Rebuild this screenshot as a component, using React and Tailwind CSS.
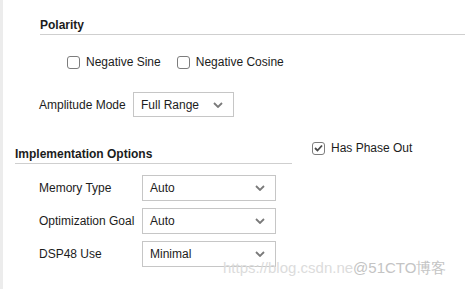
import React from "react";

function Chevron() {
  return (
    <svg width="10" height="6" viewBox="0 0 10 6" className="shrink-0">
      <path d="M1 1 L5 5 L9 1" fill="none" stroke="#7a7a7a" strokeWidth="1.8" />
    </svg>
  );
}

function Select({ value, w, h }) {
  return (
    <div
      className={`flex items-center justify-between border border-[#c6c6c6] bg-white pl-[7px] pr-[10px] ${w} ${h}`}
    >
      <span>{value}</span>
      <Chevron />
    </div>
  );
}

function Box({ checked }) {
  return (
    <div className="flex h-[13px] w-[13px] shrink-0 items-center justify-center rounded-[3px] border border-[#7d7d7d] bg-white">
      {checked && (
        <svg width="9" height="8" viewBox="0 0 9 8">
          <path d="M1 4 L3.5 6.5 L8 1.5" fill="none" stroke="#4a4a4a" strokeWidth="1.8" />
        </svg>
      )}
    </div>
  );
}

export default function App() {
  return (
    <div
      className="relative flex h-[289px] w-[465px] overflow-hidden bg-white text-[12px] leading-[14px] text-[#1c1c1c]"
      style={{ fontFamily: '"Liberation Sans", Arial, sans-serif' }}
    >
      <div className="w-[3px] shrink-0 bg-[#ececec]" />
      <div className="flex flex-1 flex-col">
        {/* Polarity */}
        <div className="ml-[37px] mt-[18px] border-b border-[#cfcfcf] pb-[2px] font-bold">Polarity</div>
        <div className="ml-[64px] mt-[20px] flex items-center">
          <Box />
          <span className="ml-[6px]">Negative Sine</span>
          <div className="ml-[16px]">
            <Box />
          </div>
          <span className="ml-[6px]">Negative Cosine</span>
        </div>
        <div className="ml-[36px] mt-[23px] flex items-center">
          <span className="w-[94px]">Amplitude Mode</span>
          <Select value="Full Range" w="w-[101px]" h="h-[25px]" />
        </div>

        <div className="flex items-start">
          <div className="ml-[12px] mt-[30px] w-[277px]">
            <div className="border-b border-[#cfcfcf] pb-[2px] font-bold">Implementation Options</div>
            <div className="mt-[11px] flex flex-col gap-[7px] pl-[24px]">
              <div className="flex items-center">
                <span className="w-[103px]">Memory Type</span>
                <Select value="Auto" w="w-[134px]" h="h-[26px]" />
              </div>
              <div className="flex items-center">
                <span className="w-[103px]">Optimization Goal</span>
                <Select value="Auto" w="w-[134px]" h="h-[26px]" />
              </div>
              <div className="flex items-center">
                <span className="w-[103px]">DSP48 Use</span>
                <Select value="Minimal" w="w-[134px]" h="h-[26px]" />
              </div>
            </div>
          </div>
          <div className="ml-[20px] mt-[24px] flex items-center">
            <Box checked />
            <span className="ml-[6px]">Has Phase Out</span>
          </div>
        </div>
      </div>

      <div className="pointer-events-none absolute left-[223px] top-[259px] flex items-baseline text-[15px] leading-[18px]">
        <span className="text-[#dcdcdc]">https://blog.csdn.ne</span>
        <span className="text-[#c4c4c4]">@51CTO博客</span>
      </div>
    </div>
  );
}
